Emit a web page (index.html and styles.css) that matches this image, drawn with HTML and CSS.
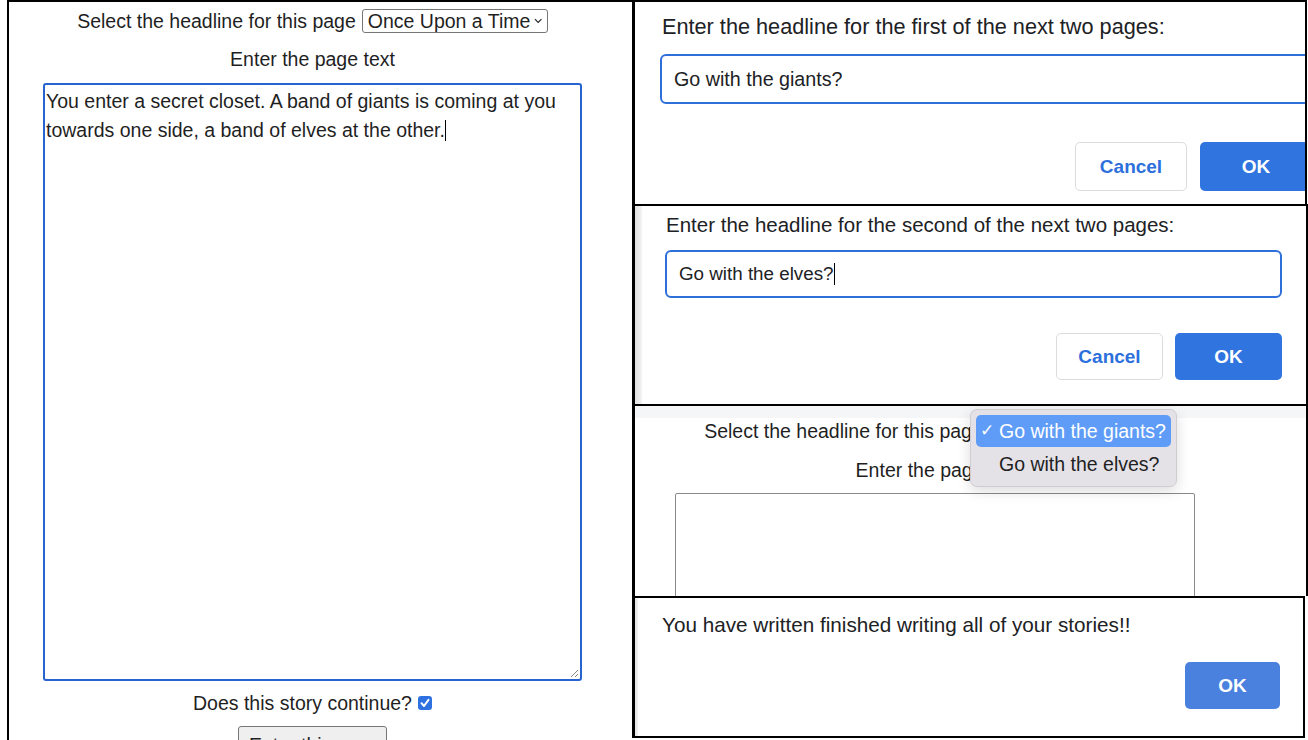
FILE: index.html
```html
<!DOCTYPE html>
<html>
<head>
<meta charset="utf-8">
<link rel="stylesheet" href="styles.css">
</head>
<body>
<div class="collage">
  <section class="left-panel">
    <div class="form">
      <div class="row">
        <span class="label">Select the headline for this page</span>
        <span class="select big-select">Once Upon a Time<svg class="chev" width="9" height="6" viewBox="0 0 9 6"><path d="M1 1 L4.5 4.5 L8 1" fill="none" stroke="#222" stroke-width="1.2"/></svg></span>
      </div>
      <div class="label center">Enter the page text</div>
      <div class="textarea focused">You enter a secret closet. A band of giants is coming at you towards one side, a band of elves at the other.<span class="caret"></span>
        <svg class="grip" width="10" height="10" viewBox="0 0 10 10"><path d="M9 2 L2 9 M9 6 L6 9" stroke="#888" stroke-width="1"/></svg>
      </div>
      <div class="row check-row">
        <span class="label">Does this story continue?</span>
        <span class="checkbox"><svg width="14" height="14" viewBox="0 0 14 14"><path d="M3.5 7.2 L6 10 L10.5 3.8" fill="none" stroke="#fff" stroke-width="2" stroke-linecap="round" stroke-linejoin="round"/></svg></span>
      </div>
      <div class="row">
        <span class="btn-native">Enter this page</span>
      </div>
    </div>
  </section>

  <div class="right-col">
    <section class="panel p1">
      <div class="dialog d1">
        <div class="dlabel">Enter the headline for the first of the next two pages:</div>
        <div class="dinput">Go with the giants?</div>
        <div class="actions">
          <span class="btn cancel">Cancel</span>
          <span class="btn ok">OK</span>
        </div>
      </div>
    </section>

    <section class="panel p2">
      <div class="dialog d2">
        <div class="dlabel">Enter the headline for the second of the next two pages:</div>
        <div class="dinput">Go with the elves?<span class="caret small"></span></div>
        <div class="actions">
          <span class="btn cancel">Cancel</span>
          <span class="btn ok">OK</span>
        </div>
      </div>
    </section>

    <section class="panel p3">
      <div class="band"></div>
      <div class="mini-form">
        <div class="row">
          <span class="label">Select the headline for this page</span>
          <span class="select mini-select">Go with the giants?</span>
        </div>
        <div class="label center mini-label">Enter the page text</div>
        <div class="textarea plain"></div>
      </div>
      <div class="popup">
        <div class="opt selected"><span class="tick">✓</span>Go with the giants?</div>
        <div class="opt">Go with the elves?</div>
      </div>
    </section>

    <section class="panel p4">
      <div class="dialog d4">
        <div class="dlabel">You have written finished writing all of your stories!!</div>
        <div class="actions">
          <span class="btn ok ok-light">OK</span>
        </div>
      </div>
    </section>
  </div>
</div>
</body>
</html>
```

FILE: styles.css
```css
* { box-sizing: border-box; }
html, body {
  margin: 0;
  padding: 0;
  background: #fff;
}
body {
  width: 1308px;
  height: 740px;
  overflow: hidden;
  font-family: "Liberation Sans", Arial, sans-serif;
  color: #1f1f1f;
}
.collage {
  display: grid;
  grid-template-columns: 632px 676px;
  height: 740px;
}

/* ---------- left panel ---------- */
.left-panel {
  margin-left: 7px;
  border-left: 2px solid #000;
  border-top: 2px solid #000;
  height: 740px;
  overflow: hidden;
}
.form {
  padding: 7px 49px 0 33px;
  display: flex;
  flex-direction: column;
  align-items: center;
  font-size: 19.5px;
}
.row {
  display: flex;
  align-items: center;
  justify-content: center;
  gap: 6px;
}
.label {
  line-height: 22px;
  white-space: nowrap;
}
.center { text-align: center; }
.form > .center { margin-top: 15px; }
.select {
  display: inline-flex;
  align-items: center;
  height: 24px;
  border: 1px solid #767676;
  border-radius: 3px;
  padding: 0 4px 0 5px;
  background: #fff;
  white-space: nowrap;
  line-height: 22px;
}
.big-select { width: 186px; justify-content: space-between; }
.chev { margin-left: 4px; }
.textarea {
  position: relative;
  width: 539px;
  height: 598px;
  margin-top: 13px;
  padding: 2px 2px 2px 1px;
  line-height: 29px;
  font-size: 19.5px;
  background: #fff;
}
.focused {
  border: 2px solid #2864cf;
  border-radius: 3px;
}
.caret {
  display: inline-block;
  width: 1px;
  height: 21px;
  background: #000;
  vertical-align: -4px;
}
.caret.small { height: 22px; vertical-align: -5px; }
.grip {
  position: absolute;
  right: 1px;
  bottom: 1px;
}
.check-row { margin-top: 11px; }
.checkbox {
  width: 14px;
  height: 14px;
  border-radius: 3px;
  background: #2e72e2;
  display: inline-flex;
}
.btn-native {
  margin-top: 12px;
  width: 149px;
  height: 30px;
  border: 1px solid #767676;
  border-radius: 3px;
  background: #efefef;
  padding: 7px 0 0 10px;
  line-height: 22px;
  white-space: nowrap;
  overflow: hidden;
}

/* ---------- right column ---------- */
.right-col {
  display: flex;
  flex-direction: column;
  height: 740px;
}
.panel {
  position: relative;
  border-top: 2px solid #000;
  border-left: 3px solid #000;
  border-right: 2px solid #000;
  overflow: hidden;
  background: #fff;
}
.p1 { height: 204px; margin-right: 1px; }
.p2 { height: 200px; }
.p3 { height: 192px; }
.p4 { height: 142px; border-bottom: 2px solid #000; margin-right: 3px; }

.p2::before, .p4::before {
  content: "";
  position: absolute;
  left: 0;
  top: 0;
  bottom: 0;
  width: 7px;
  background: linear-gradient(to right, #e2e2e2, #f3f3f3);
}
.p4::before { width: 3px; }

.dialog {
  font-size: 20.5px;
  color: #202124;
}
.dlabel {
  line-height: 24px;
  white-space: nowrap;
}
.dinput {
  border: 2px solid #2f6fda;
  border-radius: 6px;
  padding-left: 12px;
  display: flex;
  align-items: center;
  font-size: 19.7px;
  white-space: nowrap;
}
.actions {
  display: flex;
  justify-content: flex-end;
  gap: 13px;
}
.btn {
  display: inline-flex;
  align-items: center;
  justify-content: center;
  border-radius: 5px;
  font-weight: bold;
  font-size: 19px;
}
.cancel {
  background: #fff;
  border: 1px solid #dadce0;
  color: #2d6fdc;
}
.ok {
  background: #2f74df;
  color: #fff;
}
.ok-light { background: #4a80de; }

.d1 { width: 652px; margin-left: 25px; padding-top: 13px; }
.d1 .dlabel { padding-left: 2px; font-size: 21.7px; }
.d1 .dinput { margin-top: 15px; height: 50px; }
.d1 .actions { margin-top: 38px; }
.d1 .btn { width: 112px; height: 49px; }

.d2 { width: 617px; margin-left: 30px; padding-top: 7px; }
.d2 .dlabel { padding-left: 1px; }
.d2 .dinput { margin-top: 13px; height: 48px; font-size: 18.8px; }
.d2 .actions { margin-top: 35px; gap: 12px; }
.d2 .btn { width: 107px; height: 47px; }

.p3 .band {
  height: 12px;
  background: #f5f6f8;
}
.mini-form {
  width: 520px;
  margin-left: 40px;
  display: flex;
  flex-direction: column;
  align-items: center;
  font-size: 19.5px;
}
.mini-form .row { margin-top: 1px; }
.mini-select { width: 177px; }
.mini-label { margin-top: 16px; padding-left: 6px; }
.plain {
  margin-top: 12px;
  width: 520px;
  height: 140px;
  border: 1px solid #8a8a8a;
  border-radius: 2px;
}
.popup {
  position: absolute;
  left: 335px;
  top: 3px;
  width: 207px;
  height: 78px;
  background: #e4e2e7;
  border: 1px solid #cfcdd2;
  border-radius: 7px;
  box-shadow: 0 4px 14px rgba(0,0,0,0.14);
  padding: 5px 5px;
  font-size: 19.5px;
  color: #1f1f1f;
}
.opt {
  height: 32px;
  line-height: 32px;
  padding-left: 23px;
  border-radius: 5px;
  position: relative;
  white-space: nowrap;
}
.opt + .opt { line-height: 34px; }
.opt.selected {
  background: #5e9cf7;
  color: #fff;
}
.tick {
  position: absolute;
  left: 4px;
  top: 0;
  font-size: 17px;
}

.d4 { width: 618px; margin-left: 27px; padding-top: 15px; font-size: 20.7px; }
.d4 .actions { margin-top: 25px; }
.d4 .btn { width: 95px; height: 47px; }
```
